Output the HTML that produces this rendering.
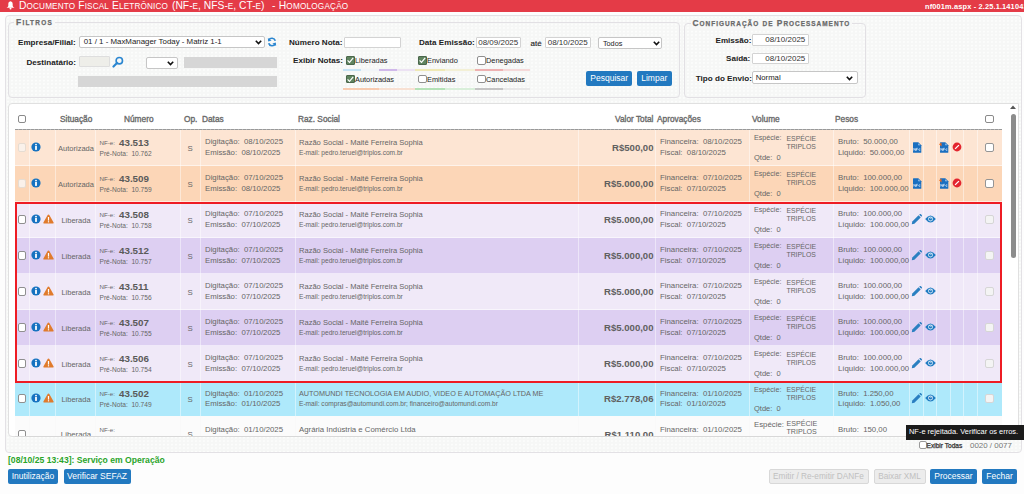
<!DOCTYPE html><html><head><meta charset='utf-8'><style>
*{box-sizing:border-box;margin:0;padding:0}
html,body{width:1024px;height:494px;overflow:hidden;background:#fdfdfd;font-family:"Liberation Sans", sans-serif;position:relative}
.a{position:absolute;white-space:pre}
.hdr{left:0;top:0;width:1024px;height:12px;background:#e43b47}
.panel{left:5px;top:15px;width:1017px;height:438px;border:1px solid #e3e1e5;border-radius:4px;background:radial-gradient(circle at 2px 1.5px,#fdfefd 0.7px,rgba(253,254,253,0) 1px) 0 0/4px 3.5px,#f6f7f6}
.fs{border:1px solid #e2e0e4;border-radius:4px}
.lg{font-weight:bold;color:#6a6a6a;-webkit-text-stroke:0.25px #6a6a6a;background:#f7f8f7;padding:0 2px}
.lbl{font-weight:bold;color:#222;font-size:8.1px;line-height:10px}
.inp{background:#fff;border:1px solid #d3d3d3;border-radius:1px;font-size:8.6px;color:#333;line-height:9px}
.sel{background:#fff;border:1px solid #c6c6c6;border-radius:2px;font-size:8.2px;color:#222;line-height:9px}
.btn{background:#2279c0;color:#fff;border-radius:2px;font-size:8.5px;text-align:center;line-height:15px}
.btnd{background:#ececec;color:#c0c0c0;border:1px solid #d8d8d8;border-radius:2px;font-size:8.25px;text-align:center;line-height:13px}
.gbar{background:#d6d6d6}
.cb{width:8.5px;height:8.5px;border:1px solid #8f8f8f;border-radius:2px;background:#fff}
.cbd{width:8.5px;height:8.5px;border:1px solid #d6d6d6;border-radius:2px;background:#f4f4f4}
.cbc{width:8.5px;height:8.5px;border:1px solid #4a664b;border-radius:1px;background:#5f845f}
.ck{font-size:7.4px;color:#222;line-height:9px}
.t{font-size:7.8px;color:#666;line-height:9px}
.ts{font-size:6.6px;color:#666;line-height:8px}
.th{font-size:8.3px;color:#6a6a6a;line-height:10px;-webkit-text-stroke:0.35px #6a6a6a}
.num{font-size:9.8px;font-weight:bold;color:#5a5a5a;line-height:10px}
.val{font-size:9.57px;font-weight:bold;color:#606060;line-height:10px}
.dv{width:1px;background:rgba(255,255,255,.45)}
</style></head><body><div class="a hdr"></div>
<svg class="a" style="left:5.5px;top:0px" width="9" height="11" viewBox="0 0 9 11"><path d="M4.5 1.2C2.8 1.5 2.3 2.8 2.3 4.4L2.3 6Q2 7 0.5 7.8L8.5 7.8Q7 7 6.7 6L6.7 4.4C6.7 2.8 6.2 1.5 4.5 1.2Z" fill="#fff"/><circle cx="4.5" cy="8.6" r="1" fill="#fff"/></svg>
<div class="a " style="left:19px;top:-0.5px;font-size:10.3px;line-height:11px;color:#fff;letter-spacing:0.13px">D<span style='font-size:8.2px'>OCUMENTO</span> F<span style='font-size:8.2px'>ISCAL</span> E<span style='font-size:8.2px'>LETRÔNICO</span></div>
<div class="a " style="left:172px;top:-0.5px;font-size:10.3px;line-height:11px;color:#fff">(NF-<span style='font-size:8.2px'>E</span>, NFS-<span style='font-size:8.2px'>E</span>, CT-<span style='font-size:8.2px'>E</span>)</div>
<div class="a " style="left:272px;top:-0.5px;font-size:10.3px;line-height:11px;color:#fff;letter-spacing:0.2px">- H<span style='font-size:8.2px'>OMOLOGAÇÃO</span></div>
<div class="a " style="left:925px;top:1px;font-size:7.4px;line-height:11px;color:#fff;font-weight:bold;letter-spacing:0.15px">nf001m.aspx - 2.25.1.141041</div>
<div class="a panel"></div>
<div class="a fs" style="left:8px;top:22px;width:672px;height:76px;"></div>
<div class="a lg" style="left:14px;top:17.2px;font-size:8.4px;line-height:10px;letter-spacing:1.25px">F<span style='font-size:6.45px'>ILTROS</span></div>
<div class="a fs" style="left:684px;top:22.5px;width:182px;height:75px;"></div>
<div class="a lg" style="left:690.5px;top:18px;font-size:8.4px;line-height:10px;letter-spacing:1px">C<span style='font-size:6.45px'>ONFIGURAÇÃO</span> <span style='font-size:6.45px'>DE</span> P<span style='font-size:6.45px'>ROCESSAMENTO</span></div>
<div class="a lbl" style="left:18px;top:37.5px;">Empresa/Filial:</div>
<div class="a sel" style="left:78.5px;top:36px;width:186px;height:11.5px;padding-left:2px;line-height:10.5px;font-size:7.9px"> 01 / 1 - MaxManager Today - Matriz 1-1</div>
<svg class="a" style="left:255px;top:40px" width="7" height="5" viewBox="0 0 7 5"><path d="M0.8 0.8L3.5 3.6L6.2 0.8" stroke="#111" stroke-width="1.6" fill="none"/></svg>
<svg class="a" style="left:267px;top:37px" width="10" height="10" viewBox="0 0 10 10"><path d="M8.3 3.8A3.5 3.5 0 0 0 1.8 3.2" stroke="#2b86d0" stroke-width="1.7" fill="none"/><path d="M0.8 1L1.2 4.6L4.6 3.6Z" fill="#2b86d0"/><path d="M1.7 6.2A3.5 3.5 0 0 0 8.2 6.8" stroke="#2b86d0" stroke-width="1.7" fill="none"/><path d="M9.2 9L8.8 5.4L5.4 6.4Z" fill="#2b86d0"/></svg>
<div class="a lbl" style="left:26.5px;top:57.5px;">Destinatário:</div>
<div class="a " style="left:78.5px;top:56px;width:31px;height:11px;background:#eeeee9;border:1px solid #dedede;border-radius:1px"></div>
<svg class="a" style="left:112px;top:56px" width="12" height="12" viewBox="0 0 12 12"><circle cx="7.3" cy="4.7" r="3.2" stroke="#2b86d0" stroke-width="1.6" fill="none"/><path d="M5 7L1.5 10.5" stroke="#2b86d0" stroke-width="2.2" stroke-linecap="round"/></svg>
<div class="a sel" style="left:145.5px;top:56.5px;width:32px;height:12px;"></div>
<svg class="a" style="left:167px;top:60.5px" width="7" height="5" viewBox="0 0 7 5"><path d="M0.8 0.8L3.5 3.6L6.2 0.8" stroke="#111" stroke-width="1.6" fill="none"/></svg>
<div class="a gbar" style="left:184px;top:57px;width:93px;height:10.5px;"></div>
<div class="a gbar" style="left:78px;top:76.2px;width:199px;height:10.5px;"></div>
<div class="a lbl" style="left:289px;top:38px;">Número Nota:</div>
<div class="a inp" style="left:343.5px;top:37px;width:57px;height:10.5px;"></div>
<div class="a lbl" style="left:293px;top:56px;">Exibir Notas:</div>
<div class="a cbc" style="left:346px;top:56px;"></div>
<svg class="a" style="left:346px;top:56px" width="9" height="9" viewBox="0 0 9 9"><path d="M1.6 4.4L3.5 6.4L7.2 1.8" stroke="#fff" stroke-width="1.2" fill="none"/></svg>
<div class="a ck" style="left:355px;top:56px;">Liberadas</div>
<div class="a cbc" style="left:418px;top:56px;"></div>
<svg class="a" style="left:418px;top:56px" width="9" height="9" viewBox="0 0 9 9"><path d="M1.6 4.4L3.5 6.4L7.2 1.8" stroke="#fff" stroke-width="1.2" fill="none"/></svg>
<div class="a ck" style="left:427px;top:56px;">Enviando</div>
<div class="a cb" style="left:477px;top:56px;"></div>
<div class="a ck" style="left:486px;top:56px;">Denegadas</div>
<div class="a cbc" style="left:346px;top:74.5px;"></div>
<svg class="a" style="left:346px;top:74.5px" width="9" height="9" viewBox="0 0 9 9"><path d="M1.6 4.4L3.5 6.4L7.2 1.8" stroke="#fff" stroke-width="1.2" fill="none"/></svg>
<div class="a ck" style="left:355px;top:74.5px;">Autorizadas</div>
<div class="a cb" style="left:418px;top:74.5px;"></div>
<div class="a ck" style="left:427px;top:74.5px;">Emitidas</div>
<div class="a cb" style="left:477px;top:74.5px;"></div>
<div class="a ck" style="left:486px;top:74.5px;">Canceladas</div>
<div class="a " style="left:343px;top:69px;width:18px;height:2px;background:#c5e3f5"></div>
<div class="a " style="left:361px;top:69px;width:18px;height:2px;background:#f1f5f8"></div>
<div class="a " style="left:379px;top:69px;width:18px;height:2px;background:#d0b8ea"></div>
<div class="a " style="left:397px;top:69px;width:18px;height:2px;background:#ece2f3"></div>
<div class="a " style="left:415px;top:69px;width:30px;height:2px;background:#efe9b5"></div>
<div class="a " style="left:445px;top:69px;width:30px;height:2px;background:#f3f0d6"></div>
<div class="a " style="left:475px;top:69px;width:28px;height:2px;background:#eeb1b1"></div>
<div class="a " style="left:503px;top:69px;width:27px;height:2px;background:#f5d9d9"></div>
<div class="a " style="left:343px;top:87.5px;width:36px;height:2px;background:#f8cbb0"></div>
<div class="a " style="left:379px;top:87.5px;width:36px;height:2px;background:#f8e1d3"></div>
<div class="a " style="left:415px;top:87.5px;width:30px;height:2px;background:#b5e2b7"></div>
<div class="a " style="left:445px;top:87.5px;width:30px;height:2px;background:#d9efda"></div>
<div class="a " style="left:475px;top:87.5px;width:28px;height:2px;background:#c4c4c4"></div>
<div class="a " style="left:503px;top:87.5px;width:27px;height:2px;background:#e8e8e8"></div>
<div class="a lbl" style="left:419px;top:38px;">Data Emissão:</div>
<div class="a inp" style="left:475.5px;top:37px;width:45.5px;height:10.5px;text-align:center;font-size:8px">08/09/2025</div>
<div class="a " style="left:530.5px;top:38.5px;font-size:8px;color:#222;line-height:10px;-webkit-text-stroke:0.15px #222">até</div>
<div class="a inp" style="left:545px;top:37px;width:45.5px;height:10.5px;text-align:center;font-size:8px">08/10/2025</div>
<div class="a sel" style="left:598px;top:36.5px;width:64px;height:12px;padding-left:2px;line-height:11px;font-size:7.3px"> Todos</div>
<svg class="a" style="left:652.5px;top:40.5px" width="7" height="5" viewBox="0 0 7 5"><path d="M0.8 0.8L3.5 3.6L6.2 0.8" stroke="#111" stroke-width="1.6" fill="none"/></svg>
<div class="a btn" style="left:586.2px;top:71.3px;width:46px;height:15px;">Pesquisar</div>
<div class="a btn" style="left:636.9px;top:71.3px;width:34.7px;height:15px;">Limpar</div>
<div class="a lbl" style="left:715.5px;top:35.5px;">Emissão:</div>
<div class="a inp" style="left:751.5px;top:34px;width:57px;height:11.5px;text-align:right;line-height:10px;font-size:8px">08/10/2025 </div>
<div class="a lbl" style="left:726px;top:53.5px;">Saída:</div>
<div class="a inp" style="left:751.5px;top:53px;width:57px;height:10.5px;text-align:right;line-height:9px;font-size:8px">08/10/2025 </div>
<div class="a lbl" style="left:695.8px;top:73.5px;">Tipo do Envio:</div>
<div class="a sel" style="left:751.5px;top:71px;width:106px;height:13px;padding-left:1px;line-height:12px;font-size:7.75px"> Normal</div>
<svg class="a" style="left:846px;top:75.5px" width="7" height="5" viewBox="0 0 7 5"><path d="M0.8 0.8L3.5 3.6L6.2 0.8" stroke="#111" stroke-width="1.6" fill="none"/></svg>
<div class="a " style="left:8px;top:102.5px;width:1011px;height:334px;background:#fff;border:1px solid #e0e0e0;border-radius:4px 0 4px 4px"></div>
<div class="a cb" style="left:17.5px;top:114.5px;border-color:#8a8a8a"></div>
<div class="a th" style="left:60px;top:114px;">Situação</div>
<div class="a th" style="left:124px;top:114px;">Número</div>
<div class="a th" style="left:184px;top:114px;">Op.</div>
<div class="a th" style="left:202px;top:114px;">Datas</div>
<div class="a th" style="left:298px;top:114px;">Raz. Social</div>
<div class="a th" style="left:615px;top:114px;">Valor Total</div>
<div class="a th" style="left:657px;top:114px;">Aprovações</div>
<div class="a th" style="left:752px;top:114px;">Volume</div>
<div class="a th" style="left:835px;top:114px;">Pesos</div>
<div class="a cb" style="left:985px;top:114.5px;border-color:#8a8a8a"></div>
<div class="a " style="left:15px;top:128.5px;width:987px;height:2px;background:repeating-linear-gradient(90deg,#999 0 3px,#b5b5b5 3px 4px)"></div>
<div class="a " style="left:15px;top:130px;width:987px;height:36px;background:#fde5d3"></div>
<div class="a dv" style="left:29px;top:130px;height:36px;"></div>
<div class="a dv" style="left:55px;top:130px;height:36px;"></div>
<div class="a dv" style="left:95px;top:130px;height:36px;"></div>
<div class="a dv" style="left:180px;top:130px;height:36px;"></div>
<div class="a dv" style="left:200px;top:130px;height:36px;"></div>
<div class="a dv" style="left:295px;top:130px;height:36px;"></div>
<div class="a dv" style="left:578px;top:130px;height:36px;"></div>
<div class="a dv" style="left:655px;top:130px;height:36px;"></div>
<div class="a dv" style="left:749px;top:130px;height:36px;"></div>
<div class="a dv" style="left:833px;top:130px;height:36px;"></div>
<div class="a dv" style="left:909px;top:130px;height:36px;"></div>
<div class="a dv" style="left:923px;top:130px;height:36px;"></div>
<div class="a dv" style="left:936px;top:130px;height:36px;"></div>
<div class="a dv" style="left:950px;top:130px;height:36px;"></div>
<div class="a dv" style="left:963px;top:130px;height:36px;"></div>
<div class="a dv" style="left:977px;top:130px;height:36px;"></div>
<div class="a " style="left:15px;top:165px;width:987px;height:1px;background:rgba(255,255,255,.55)"></div>
<div class="a cbd" style="left:17.5px;top:143.0px;border-color:#e6dcd2;background:#faf1ea"></div>
<svg class="a" style="left:31px;top:142.0px" width="10" height="10" viewBox="0 0 10 10"><circle cx="5" cy="5" r="4.6" fill="#1672c0"/><rect x="4.1" y="4" width="1.8" height="3.9" fill="#fff"/><circle cx="5" cy="2.6" r="0.95" fill="#fff"/></svg>
<div class="a t" style="left:57px;top:143.5px;width:38px;text-align:center;font-size:7.5px">Autorizada</div>
<div class="a ts" style="left:99.5px;top:139.0px;font-size:6.2px">NF-e:</div>
<div class="a num" style="left:119px;top:138.0px;">43.513</div>
<div class="a ts" style="left:99.5px;top:149.5px;">Pré-Nota:  10.762</div>
<div class="a t" style="left:187px;top:143.5px;width:6px;text-align:center">S</div>
<div class="a t" style="left:205px;top:137.4px;">Digitação:  08/10/2025</div>
<div class="a t" style="left:205px;top:147.9px;">Emissão:  08/10/2025</div>
<div class="a t" style="left:299px;top:138.0px;font-size:7.55px">Razão Social - Maitê Ferreira Sophia</div>
<div class="a ts" style="left:299px;top:148.5px;">E-mail: pedro.teruel@triplos.com.br</div>
<div class="a val" style="left:560px;top:143.0px;width:93.5px;text-align:right">R$500,00</div>
<div class="a t" style="left:660px;top:137.4px;">Financeira:  08/10/2025</div>
<div class="a t" style="left:660px;top:147.9px;">Fiscal:  08/10/2025</div>
<div class="a t" style="left:754px;top:134.4px;font-size:7.15px">Espécie:</div>
<div class="a t" style="left:786.5px;top:134.0px;font-size:6.85px">ESPÉCIE</div>
<div class="a t" style="left:786.5px;top:142.0px;font-size:6.85px">TRIPLOS</div>
<div class="a t" style="left:754px;top:153.0px;font-size:7.5px">Qtde:  0</div>
<div class="a t" style="left:838px;top:137.4px;">Bruto:  50.000,00</div>
<div class="a t" style="left:838px;top:147.9px;">Liquido:  50.000,00</div>
<svg class="a" style="left:911.5px;top:141.7px" width="10" height="11" viewBox="0 0 10 11"><path d="M1 0.8Q1 0.3 1.5 0.3L6.3 0.3L9.3 3.3L9.3 10.2Q9.3 10.7 8.8 10.7L1.5 10.7Q1 10.7 1 10.2Z" fill="#1a6fc0"/><path d="M6.3 1.3L6.3 3.3L8.3 3.3Z" fill="#b8d4ef"/><path d="M1.9 8.6L1.9 6.3L3.6 8.6L3.6 6.3 M4.5 8.6L4.5 6.3L5.8 6.3 M4.5 7.4L5.5 7.4 M8.3 6.9Q6.7 6.5 6.7 7.6Q6.7 8.7 8.3 8.3" stroke="#d6e6f6" stroke-width="0.75" fill="none"/></svg>
<svg class="a" style="left:938.5px;top:141.7px" width="10" height="11" viewBox="0 0 10 11"><path d="M1 0.8Q1 0.3 1.5 0.3L6.3 0.3L9.3 3.3L9.3 10.2Q9.3 10.7 8.8 10.7L1.5 10.7Q1 10.7 1 10.2Z" fill="#1a6fc0"/><path d="M6.3 1.3L6.3 3.3L8.3 3.3Z" fill="#b8d4ef"/><path d="M1.9 8.6L1.9 6.3L3.6 8.6L3.6 6.3 M4.5 8.6L4.5 6.3L5.8 6.3 M4.5 7.4L5.5 7.4 M8.3 6.9Q6.7 6.5 6.7 7.6Q6.7 8.7 8.3 8.3" stroke="#d6e6f6" stroke-width="0.75" fill="none"/><path d="M0 2.2L2.4 0.4L2.6 4.6Z" fill="#f06a1c"/></svg>
<svg class="a" style="left:951.5px;top:142.0px" width="10" height="10" viewBox="0 0 10 10"><circle cx="5" cy="5" r="4.4" fill="#e3252f"/><path d="M3.1 6.9L6.9 3.1" stroke="#fff" stroke-width="1.3"/></svg>
<div class="a cb" style="left:985px;top:143.0px;border-color:#959595"></div>
<div class="a " style="left:15px;top:166px;width:987px;height:36px;background:#fcd6b7"></div>
<div class="a dv" style="left:29px;top:166px;height:36px;"></div>
<div class="a dv" style="left:55px;top:166px;height:36px;"></div>
<div class="a dv" style="left:95px;top:166px;height:36px;"></div>
<div class="a dv" style="left:180px;top:166px;height:36px;"></div>
<div class="a dv" style="left:200px;top:166px;height:36px;"></div>
<div class="a dv" style="left:295px;top:166px;height:36px;"></div>
<div class="a dv" style="left:578px;top:166px;height:36px;"></div>
<div class="a dv" style="left:655px;top:166px;height:36px;"></div>
<div class="a dv" style="left:749px;top:166px;height:36px;"></div>
<div class="a dv" style="left:833px;top:166px;height:36px;"></div>
<div class="a dv" style="left:909px;top:166px;height:36px;"></div>
<div class="a dv" style="left:923px;top:166px;height:36px;"></div>
<div class="a dv" style="left:936px;top:166px;height:36px;"></div>
<div class="a dv" style="left:950px;top:166px;height:36px;"></div>
<div class="a dv" style="left:963px;top:166px;height:36px;"></div>
<div class="a dv" style="left:977px;top:166px;height:36px;"></div>
<div class="a " style="left:15px;top:201px;width:987px;height:1px;background:rgba(255,255,255,.55)"></div>
<div class="a cbd" style="left:17.5px;top:179.0px;border-color:#e6dcd2;background:#faf1ea"></div>
<svg class="a" style="left:31px;top:178.0px" width="10" height="10" viewBox="0 0 10 10"><circle cx="5" cy="5" r="4.6" fill="#1672c0"/><rect x="4.1" y="4" width="1.8" height="3.9" fill="#fff"/><circle cx="5" cy="2.6" r="0.95" fill="#fff"/></svg>
<div class="a t" style="left:57px;top:179.5px;width:38px;text-align:center;font-size:7.5px">Autorizada</div>
<div class="a ts" style="left:99.5px;top:175.0px;font-size:6.2px">NF-e:</div>
<div class="a num" style="left:119px;top:174.0px;">43.509</div>
<div class="a ts" style="left:99.5px;top:185.5px;">Pré-Nota:  10.759</div>
<div class="a t" style="left:187px;top:179.5px;width:6px;text-align:center">S</div>
<div class="a t" style="left:205px;top:173.4px;">Digitação:  07/10/2025</div>
<div class="a t" style="left:205px;top:183.9px;">Emissão:  08/10/2025</div>
<div class="a t" style="left:299px;top:174.0px;font-size:7.55px">Razão Social - Maitê Ferreira Sophia</div>
<div class="a ts" style="left:299px;top:184.5px;">E-mail: pedro.teruel@triplos.com.br</div>
<div class="a val" style="left:560px;top:179.0px;width:93.5px;text-align:right">R$5.000,00</div>
<div class="a t" style="left:660px;top:173.4px;">Financeira:  07/10/2025</div>
<div class="a t" style="left:660px;top:183.9px;">Fiscal:  07/10/2025</div>
<div class="a t" style="left:754px;top:170.4px;font-size:7.15px">Espécie:</div>
<div class="a t" style="left:786.5px;top:170.0px;font-size:6.85px">ESPÉCIE</div>
<div class="a t" style="left:786.5px;top:178.0px;font-size:6.85px">TRIPLOS</div>
<div class="a t" style="left:754px;top:189.0px;font-size:7.5px">Qtde:  0</div>
<div class="a t" style="left:838px;top:173.4px;">Bruto:  100.000,00</div>
<div class="a t" style="left:838px;top:183.9px;">Liquido:  100.000,00</div>
<svg class="a" style="left:911.5px;top:177.7px" width="10" height="11" viewBox="0 0 10 11"><path d="M1 0.8Q1 0.3 1.5 0.3L6.3 0.3L9.3 3.3L9.3 10.2Q9.3 10.7 8.8 10.7L1.5 10.7Q1 10.7 1 10.2Z" fill="#1a6fc0"/><path d="M6.3 1.3L6.3 3.3L8.3 3.3Z" fill="#b8d4ef"/><path d="M1.9 8.6L1.9 6.3L3.6 8.6L3.6 6.3 M4.5 8.6L4.5 6.3L5.8 6.3 M4.5 7.4L5.5 7.4 M8.3 6.9Q6.7 6.5 6.7 7.6Q6.7 8.7 8.3 8.3" stroke="#d6e6f6" stroke-width="0.75" fill="none"/></svg>
<svg class="a" style="left:938.5px;top:177.7px" width="10" height="11" viewBox="0 0 10 11"><path d="M1 0.8Q1 0.3 1.5 0.3L6.3 0.3L9.3 3.3L9.3 10.2Q9.3 10.7 8.8 10.7L1.5 10.7Q1 10.7 1 10.2Z" fill="#1a6fc0"/><path d="M6.3 1.3L6.3 3.3L8.3 3.3Z" fill="#b8d4ef"/><path d="M1.9 8.6L1.9 6.3L3.6 8.6L3.6 6.3 M4.5 8.6L4.5 6.3L5.8 6.3 M4.5 7.4L5.5 7.4 M8.3 6.9Q6.7 6.5 6.7 7.6Q6.7 8.7 8.3 8.3" stroke="#d6e6f6" stroke-width="0.75" fill="none"/><path d="M0 2.2L2.4 0.4L2.6 4.6Z" fill="#f06a1c"/></svg>
<svg class="a" style="left:951.5px;top:178.0px" width="10" height="10" viewBox="0 0 10 10"><circle cx="5" cy="5" r="4.4" fill="#e3252f"/><path d="M3.1 6.9L6.9 3.1" stroke="#fff" stroke-width="1.3"/></svg>
<div class="a cb" style="left:985px;top:179.0px;border-color:#959595"></div>
<div class="a " style="left:15px;top:202px;width:987px;height:36px;background:#f0e9f8"></div>
<div class="a dv" style="left:29px;top:202px;height:36px;"></div>
<div class="a dv" style="left:55px;top:202px;height:36px;"></div>
<div class="a dv" style="left:95px;top:202px;height:36px;"></div>
<div class="a dv" style="left:180px;top:202px;height:36px;"></div>
<div class="a dv" style="left:200px;top:202px;height:36px;"></div>
<div class="a dv" style="left:295px;top:202px;height:36px;"></div>
<div class="a dv" style="left:578px;top:202px;height:36px;"></div>
<div class="a dv" style="left:655px;top:202px;height:36px;"></div>
<div class="a dv" style="left:749px;top:202px;height:36px;"></div>
<div class="a dv" style="left:833px;top:202px;height:36px;"></div>
<div class="a dv" style="left:909px;top:202px;height:36px;"></div>
<div class="a dv" style="left:923px;top:202px;height:36px;"></div>
<div class="a dv" style="left:936px;top:202px;height:36px;"></div>
<div class="a dv" style="left:950px;top:202px;height:36px;"></div>
<div class="a dv" style="left:963px;top:202px;height:36px;"></div>
<div class="a dv" style="left:977px;top:202px;height:36px;"></div>
<div class="a " style="left:15px;top:237px;width:987px;height:1px;background:rgba(255,255,255,.55)"></div>
<div class="a cb" style="left:17.5px;top:215.0px;"></div>
<svg class="a" style="left:31px;top:214.0px" width="10" height="10" viewBox="0 0 10 10"><circle cx="5" cy="5" r="4.6" fill="#1672c0"/><rect x="4.1" y="4" width="1.8" height="3.9" fill="#fff"/><circle cx="5" cy="2.6" r="0.95" fill="#fff"/></svg>
<svg class="a" style="left:43.2px;top:213.8px" width="11" height="10" viewBox="0 0 11 10"><path d="M5.5 0.6Q6.1 0.6 6.5 1.3L10.6 8.4Q11 9.4 10 9.5L1 9.5Q0 9.4 0.4 8.4L4.5 1.3Q4.9 0.6 5.5 0.6Z" fill="#e07b2c"/><rect x="4.9" y="3" width="1.2" height="3.6" fill="#fff"/><rect x="4.9" y="7.2" width="1.2" height="1.2" fill="#fff"/></svg>
<div class="a t" style="left:57px;top:215.5px;width:38px;text-align:center;font-size:7.5px">Liberada</div>
<div class="a ts" style="left:99.5px;top:211.0px;font-size:6.2px">NF-e:</div>
<div class="a num" style="left:119px;top:210.0px;">43.508</div>
<div class="a ts" style="left:99.5px;top:221.5px;">Pré-Nota:  10.758</div>
<div class="a t" style="left:187px;top:215.5px;width:6px;text-align:center">S</div>
<div class="a t" style="left:205px;top:209.4px;">Digitação:  07/10/2025</div>
<div class="a t" style="left:205px;top:219.9px;">Emissão:  07/10/2025</div>
<div class="a t" style="left:299px;top:210.0px;font-size:7.55px">Razão Social - Maitê Ferreira Sophia</div>
<div class="a ts" style="left:299px;top:220.5px;">E-mail: pedro.teruel@triplos.com.br</div>
<div class="a val" style="left:560px;top:215.0px;width:93.5px;text-align:right">R$5.000,00</div>
<div class="a t" style="left:660px;top:209.4px;">Financeira:  07/10/2025</div>
<div class="a t" style="left:660px;top:219.9px;">Fiscal:  07/10/2025</div>
<div class="a t" style="left:754px;top:206.4px;font-size:7.15px">Espécie:</div>
<div class="a t" style="left:786.5px;top:206.0px;font-size:6.85px">ESPÉCIE</div>
<div class="a t" style="left:786.5px;top:214.0px;font-size:6.85px">TRIPLOS</div>
<div class="a t" style="left:754px;top:225.0px;font-size:7.5px">Qtde:  0</div>
<div class="a t" style="left:838px;top:209.4px;">Bruto:  100.000,00</div>
<div class="a t" style="left:838px;top:219.9px;">Líquido:  100.000,00</div>
<svg class="a" style="left:910.8px;top:213.7px" width="11" height="11" viewBox="0 0 11 11"><path d="M0.8 10.2L1.3 7.6L7.6 1.3L9.7 3.4L3.4 9.7Z" fill="#2a7fc1"/><path d="M8.2 0.7L9 0.1Q9.5 -0.2 10 0.3L10.7 1Q11.2 1.5 10.9 2L10.3 2.8Z" fill="#2a7fc1"/></svg>
<svg class="a" style="left:924.5px;top:215.0px" width="11" height="8" viewBox="0 0 11 8"><path d="M0.2 4Q5.5 -3.2 10.8 4Q5.5 11.2 0.2 4Z" fill="#1f7bc2"/><circle cx="5.5" cy="4" r="2.4" fill="#dcebf7"/><circle cx="5.5" cy="4" r="1.6" fill="#1f7bc2"/><circle cx="5.9" cy="3.6" r="0.5" fill="#dcebf7"/></svg>
<div class="a cbd" style="left:985px;top:215.0px;"></div>
<div class="a " style="left:15px;top:238px;width:987px;height:36px;background:#ddcff2"></div>
<div class="a dv" style="left:29px;top:238px;height:36px;"></div>
<div class="a dv" style="left:55px;top:238px;height:36px;"></div>
<div class="a dv" style="left:95px;top:238px;height:36px;"></div>
<div class="a dv" style="left:180px;top:238px;height:36px;"></div>
<div class="a dv" style="left:200px;top:238px;height:36px;"></div>
<div class="a dv" style="left:295px;top:238px;height:36px;"></div>
<div class="a dv" style="left:578px;top:238px;height:36px;"></div>
<div class="a dv" style="left:655px;top:238px;height:36px;"></div>
<div class="a dv" style="left:749px;top:238px;height:36px;"></div>
<div class="a dv" style="left:833px;top:238px;height:36px;"></div>
<div class="a dv" style="left:909px;top:238px;height:36px;"></div>
<div class="a dv" style="left:923px;top:238px;height:36px;"></div>
<div class="a dv" style="left:936px;top:238px;height:36px;"></div>
<div class="a dv" style="left:950px;top:238px;height:36px;"></div>
<div class="a dv" style="left:963px;top:238px;height:36px;"></div>
<div class="a dv" style="left:977px;top:238px;height:36px;"></div>
<div class="a " style="left:15px;top:273px;width:987px;height:1px;background:rgba(255,255,255,.55)"></div>
<div class="a cb" style="left:17.5px;top:251.0px;"></div>
<svg class="a" style="left:31px;top:250.0px" width="10" height="10" viewBox="0 0 10 10"><circle cx="5" cy="5" r="4.6" fill="#1672c0"/><rect x="4.1" y="4" width="1.8" height="3.9" fill="#fff"/><circle cx="5" cy="2.6" r="0.95" fill="#fff"/></svg>
<svg class="a" style="left:43.2px;top:249.8px" width="11" height="10" viewBox="0 0 11 10"><path d="M5.5 0.6Q6.1 0.6 6.5 1.3L10.6 8.4Q11 9.4 10 9.5L1 9.5Q0 9.4 0.4 8.4L4.5 1.3Q4.9 0.6 5.5 0.6Z" fill="#e07b2c"/><rect x="4.9" y="3" width="1.2" height="3.6" fill="#fff"/><rect x="4.9" y="7.2" width="1.2" height="1.2" fill="#fff"/></svg>
<div class="a t" style="left:57px;top:251.5px;width:38px;text-align:center;font-size:7.5px">Liberada</div>
<div class="a ts" style="left:99.5px;top:247.0px;font-size:6.2px">NF-e:</div>
<div class="a num" style="left:119px;top:246.0px;">43.512</div>
<div class="a ts" style="left:99.5px;top:257.5px;">Pré-Nota:  10.757</div>
<div class="a t" style="left:187px;top:251.5px;width:6px;text-align:center">S</div>
<div class="a t" style="left:205px;top:245.4px;">Digitação:  07/10/2025</div>
<div class="a t" style="left:205px;top:255.9px;">Emissão:  07/10/2025</div>
<div class="a t" style="left:299px;top:246.0px;font-size:7.55px">Razão Social - Maitê Ferreira Sophia</div>
<div class="a ts" style="left:299px;top:256.5px;">E-mail: pedro.teruel@triplos.com.br</div>
<div class="a val" style="left:560px;top:251.0px;width:93.5px;text-align:right">R$5.000,00</div>
<div class="a t" style="left:660px;top:245.4px;">Financeira:  07/10/2025</div>
<div class="a t" style="left:660px;top:255.9px;">Fiscal:  07/10/2025</div>
<div class="a t" style="left:754px;top:242.4px;font-size:7.15px">Espécie:</div>
<div class="a t" style="left:786.5px;top:242.0px;font-size:6.85px">ESPÉCIE</div>
<div class="a t" style="left:786.5px;top:250.0px;font-size:6.85px">TRIPLOS</div>
<div class="a t" style="left:754px;top:261.0px;font-size:7.5px">Qtde:  0</div>
<div class="a t" style="left:838px;top:245.4px;">Bruto:  100.000,00</div>
<div class="a t" style="left:838px;top:255.9px;">Líquido:  100.000,00</div>
<svg class="a" style="left:910.8px;top:249.7px" width="11" height="11" viewBox="0 0 11 11"><path d="M0.8 10.2L1.3 7.6L7.6 1.3L9.7 3.4L3.4 9.7Z" fill="#2a7fc1"/><path d="M8.2 0.7L9 0.1Q9.5 -0.2 10 0.3L10.7 1Q11.2 1.5 10.9 2L10.3 2.8Z" fill="#2a7fc1"/></svg>
<svg class="a" style="left:924.5px;top:251.0px" width="11" height="8" viewBox="0 0 11 8"><path d="M0.2 4Q5.5 -3.2 10.8 4Q5.5 11.2 0.2 4Z" fill="#1f7bc2"/><circle cx="5.5" cy="4" r="2.4" fill="#dcebf7"/><circle cx="5.5" cy="4" r="1.6" fill="#1f7bc2"/><circle cx="5.9" cy="3.6" r="0.5" fill="#dcebf7"/></svg>
<div class="a cbd" style="left:985px;top:251.0px;"></div>
<div class="a " style="left:15px;top:274px;width:987px;height:36px;background:#f0e9f8"></div>
<div class="a dv" style="left:29px;top:274px;height:36px;"></div>
<div class="a dv" style="left:55px;top:274px;height:36px;"></div>
<div class="a dv" style="left:95px;top:274px;height:36px;"></div>
<div class="a dv" style="left:180px;top:274px;height:36px;"></div>
<div class="a dv" style="left:200px;top:274px;height:36px;"></div>
<div class="a dv" style="left:295px;top:274px;height:36px;"></div>
<div class="a dv" style="left:578px;top:274px;height:36px;"></div>
<div class="a dv" style="left:655px;top:274px;height:36px;"></div>
<div class="a dv" style="left:749px;top:274px;height:36px;"></div>
<div class="a dv" style="left:833px;top:274px;height:36px;"></div>
<div class="a dv" style="left:909px;top:274px;height:36px;"></div>
<div class="a dv" style="left:923px;top:274px;height:36px;"></div>
<div class="a dv" style="left:936px;top:274px;height:36px;"></div>
<div class="a dv" style="left:950px;top:274px;height:36px;"></div>
<div class="a dv" style="left:963px;top:274px;height:36px;"></div>
<div class="a dv" style="left:977px;top:274px;height:36px;"></div>
<div class="a " style="left:15px;top:309px;width:987px;height:1px;background:rgba(255,255,255,.55)"></div>
<div class="a cb" style="left:17.5px;top:287.0px;"></div>
<svg class="a" style="left:31px;top:286.0px" width="10" height="10" viewBox="0 0 10 10"><circle cx="5" cy="5" r="4.6" fill="#1672c0"/><rect x="4.1" y="4" width="1.8" height="3.9" fill="#fff"/><circle cx="5" cy="2.6" r="0.95" fill="#fff"/></svg>
<svg class="a" style="left:43.2px;top:285.8px" width="11" height="10" viewBox="0 0 11 10"><path d="M5.5 0.6Q6.1 0.6 6.5 1.3L10.6 8.4Q11 9.4 10 9.5L1 9.5Q0 9.4 0.4 8.4L4.5 1.3Q4.9 0.6 5.5 0.6Z" fill="#e07b2c"/><rect x="4.9" y="3" width="1.2" height="3.6" fill="#fff"/><rect x="4.9" y="7.2" width="1.2" height="1.2" fill="#fff"/></svg>
<div class="a t" style="left:57px;top:287.5px;width:38px;text-align:center;font-size:7.5px">Liberada</div>
<div class="a ts" style="left:99.5px;top:283.0px;font-size:6.2px">NF-e:</div>
<div class="a num" style="left:119px;top:282.0px;">43.511</div>
<div class="a ts" style="left:99.5px;top:293.5px;">Pré-Nota:  10.756</div>
<div class="a t" style="left:187px;top:287.5px;width:6px;text-align:center">S</div>
<div class="a t" style="left:205px;top:281.4px;">Digitação:  07/10/2025</div>
<div class="a t" style="left:205px;top:291.9px;">Emissão:  07/10/2025</div>
<div class="a t" style="left:299px;top:282.0px;font-size:7.55px">Razão Social - Maitê Ferreira Sophia</div>
<div class="a ts" style="left:299px;top:292.5px;">E-mail: pedro.teruel@triplos.com.br</div>
<div class="a val" style="left:560px;top:287.0px;width:93.5px;text-align:right">R$5.000,00</div>
<div class="a t" style="left:660px;top:281.4px;">Financeira:  07/10/2025</div>
<div class="a t" style="left:660px;top:291.9px;">Fiscal:  07/10/2025</div>
<div class="a t" style="left:754px;top:278.4px;font-size:7.15px">Espécie:</div>
<div class="a t" style="left:786.5px;top:278.0px;font-size:6.85px">ESPÉCIE</div>
<div class="a t" style="left:786.5px;top:286.0px;font-size:6.85px">TRIPLOS</div>
<div class="a t" style="left:754px;top:297.0px;font-size:7.5px">Qtde:  0</div>
<div class="a t" style="left:838px;top:281.4px;">Bruto:  100.000,00</div>
<div class="a t" style="left:838px;top:291.9px;">Líquido:  100.000,00</div>
<svg class="a" style="left:910.8px;top:285.7px" width="11" height="11" viewBox="0 0 11 11"><path d="M0.8 10.2L1.3 7.6L7.6 1.3L9.7 3.4L3.4 9.7Z" fill="#2a7fc1"/><path d="M8.2 0.7L9 0.1Q9.5 -0.2 10 0.3L10.7 1Q11.2 1.5 10.9 2L10.3 2.8Z" fill="#2a7fc1"/></svg>
<svg class="a" style="left:924.5px;top:287.0px" width="11" height="8" viewBox="0 0 11 8"><path d="M0.2 4Q5.5 -3.2 10.8 4Q5.5 11.2 0.2 4Z" fill="#1f7bc2"/><circle cx="5.5" cy="4" r="2.4" fill="#dcebf7"/><circle cx="5.5" cy="4" r="1.6" fill="#1f7bc2"/><circle cx="5.9" cy="3.6" r="0.5" fill="#dcebf7"/></svg>
<div class="a cbd" style="left:985px;top:287.0px;"></div>
<div class="a " style="left:15px;top:310px;width:987px;height:36px;background:#ddcff2"></div>
<div class="a dv" style="left:29px;top:310px;height:36px;"></div>
<div class="a dv" style="left:55px;top:310px;height:36px;"></div>
<div class="a dv" style="left:95px;top:310px;height:36px;"></div>
<div class="a dv" style="left:180px;top:310px;height:36px;"></div>
<div class="a dv" style="left:200px;top:310px;height:36px;"></div>
<div class="a dv" style="left:295px;top:310px;height:36px;"></div>
<div class="a dv" style="left:578px;top:310px;height:36px;"></div>
<div class="a dv" style="left:655px;top:310px;height:36px;"></div>
<div class="a dv" style="left:749px;top:310px;height:36px;"></div>
<div class="a dv" style="left:833px;top:310px;height:36px;"></div>
<div class="a dv" style="left:909px;top:310px;height:36px;"></div>
<div class="a dv" style="left:923px;top:310px;height:36px;"></div>
<div class="a dv" style="left:936px;top:310px;height:36px;"></div>
<div class="a dv" style="left:950px;top:310px;height:36px;"></div>
<div class="a dv" style="left:963px;top:310px;height:36px;"></div>
<div class="a dv" style="left:977px;top:310px;height:36px;"></div>
<div class="a " style="left:15px;top:345px;width:987px;height:1px;background:rgba(255,255,255,.55)"></div>
<div class="a cb" style="left:17.5px;top:323.0px;"></div>
<svg class="a" style="left:31px;top:322.0px" width="10" height="10" viewBox="0 0 10 10"><circle cx="5" cy="5" r="4.6" fill="#1672c0"/><rect x="4.1" y="4" width="1.8" height="3.9" fill="#fff"/><circle cx="5" cy="2.6" r="0.95" fill="#fff"/></svg>
<svg class="a" style="left:43.2px;top:321.8px" width="11" height="10" viewBox="0 0 11 10"><path d="M5.5 0.6Q6.1 0.6 6.5 1.3L10.6 8.4Q11 9.4 10 9.5L1 9.5Q0 9.4 0.4 8.4L4.5 1.3Q4.9 0.6 5.5 0.6Z" fill="#e07b2c"/><rect x="4.9" y="3" width="1.2" height="3.6" fill="#fff"/><rect x="4.9" y="7.2" width="1.2" height="1.2" fill="#fff"/></svg>
<div class="a t" style="left:57px;top:323.5px;width:38px;text-align:center;font-size:7.5px">Liberada</div>
<div class="a ts" style="left:99.5px;top:319.0px;font-size:6.2px">NF-e:</div>
<div class="a num" style="left:119px;top:318.0px;">43.507</div>
<div class="a ts" style="left:99.5px;top:329.5px;">Pré-Nota:  10.755</div>
<div class="a t" style="left:187px;top:323.5px;width:6px;text-align:center">S</div>
<div class="a t" style="left:205px;top:317.4px;">Digitação:  07/10/2025</div>
<div class="a t" style="left:205px;top:327.9px;">Emissão:  07/10/2025</div>
<div class="a t" style="left:299px;top:318.0px;font-size:7.55px">Razão Social - Maitê Ferreira Sophia</div>
<div class="a ts" style="left:299px;top:328.5px;">E-mail: pedro.teruel@triplos.com.br</div>
<div class="a val" style="left:560px;top:323.0px;width:93.5px;text-align:right">R$5.000,00</div>
<div class="a t" style="left:660px;top:317.4px;">Financeira:  07/10/2025</div>
<div class="a t" style="left:660px;top:327.9px;">Fiscal:  07/10/2025</div>
<div class="a t" style="left:754px;top:314.4px;font-size:7.15px">Espécie:</div>
<div class="a t" style="left:786.5px;top:314.0px;font-size:6.85px">ESPÉCIE</div>
<div class="a t" style="left:786.5px;top:322.0px;font-size:6.85px">TRIPLOS</div>
<div class="a t" style="left:754px;top:333.0px;font-size:7.5px">Qtde:  0</div>
<div class="a t" style="left:838px;top:317.4px;">Bruto:  100.000,00</div>
<div class="a t" style="left:838px;top:327.9px;">Líquido:  100.000,00</div>
<svg class="a" style="left:910.8px;top:321.7px" width="11" height="11" viewBox="0 0 11 11"><path d="M0.8 10.2L1.3 7.6L7.6 1.3L9.7 3.4L3.4 9.7Z" fill="#2a7fc1"/><path d="M8.2 0.7L9 0.1Q9.5 -0.2 10 0.3L10.7 1Q11.2 1.5 10.9 2L10.3 2.8Z" fill="#2a7fc1"/></svg>
<svg class="a" style="left:924.5px;top:323.0px" width="11" height="8" viewBox="0 0 11 8"><path d="M0.2 4Q5.5 -3.2 10.8 4Q5.5 11.2 0.2 4Z" fill="#1f7bc2"/><circle cx="5.5" cy="4" r="2.4" fill="#dcebf7"/><circle cx="5.5" cy="4" r="1.6" fill="#1f7bc2"/><circle cx="5.9" cy="3.6" r="0.5" fill="#dcebf7"/></svg>
<div class="a cbd" style="left:985px;top:323.0px;"></div>
<div class="a " style="left:15px;top:346px;width:987px;height:36px;background:#f0e9f8"></div>
<div class="a dv" style="left:29px;top:346px;height:36px;"></div>
<div class="a dv" style="left:55px;top:346px;height:36px;"></div>
<div class="a dv" style="left:95px;top:346px;height:36px;"></div>
<div class="a dv" style="left:180px;top:346px;height:36px;"></div>
<div class="a dv" style="left:200px;top:346px;height:36px;"></div>
<div class="a dv" style="left:295px;top:346px;height:36px;"></div>
<div class="a dv" style="left:578px;top:346px;height:36px;"></div>
<div class="a dv" style="left:655px;top:346px;height:36px;"></div>
<div class="a dv" style="left:749px;top:346px;height:36px;"></div>
<div class="a dv" style="left:833px;top:346px;height:36px;"></div>
<div class="a dv" style="left:909px;top:346px;height:36px;"></div>
<div class="a dv" style="left:923px;top:346px;height:36px;"></div>
<div class="a dv" style="left:936px;top:346px;height:36px;"></div>
<div class="a dv" style="left:950px;top:346px;height:36px;"></div>
<div class="a dv" style="left:963px;top:346px;height:36px;"></div>
<div class="a dv" style="left:977px;top:346px;height:36px;"></div>
<div class="a " style="left:15px;top:381px;width:987px;height:1px;background:rgba(255,255,255,.55)"></div>
<div class="a cb" style="left:17.5px;top:359.0px;"></div>
<svg class="a" style="left:31px;top:358.0px" width="10" height="10" viewBox="0 0 10 10"><circle cx="5" cy="5" r="4.6" fill="#1672c0"/><rect x="4.1" y="4" width="1.8" height="3.9" fill="#fff"/><circle cx="5" cy="2.6" r="0.95" fill="#fff"/></svg>
<svg class="a" style="left:43.2px;top:357.8px" width="11" height="10" viewBox="0 0 11 10"><path d="M5.5 0.6Q6.1 0.6 6.5 1.3L10.6 8.4Q11 9.4 10 9.5L1 9.5Q0 9.4 0.4 8.4L4.5 1.3Q4.9 0.6 5.5 0.6Z" fill="#e07b2c"/><rect x="4.9" y="3" width="1.2" height="3.6" fill="#fff"/><rect x="4.9" y="7.2" width="1.2" height="1.2" fill="#fff"/></svg>
<div class="a t" style="left:57px;top:359.5px;width:38px;text-align:center;font-size:7.5px">Liberada</div>
<div class="a ts" style="left:99.5px;top:355.0px;font-size:6.2px">NF-e:</div>
<div class="a num" style="left:119px;top:354.0px;">43.506</div>
<div class="a ts" style="left:99.5px;top:365.5px;">Pré-Nota:  10.754</div>
<div class="a t" style="left:187px;top:359.5px;width:6px;text-align:center">S</div>
<div class="a t" style="left:205px;top:353.4px;">Digitação:  07/10/2025</div>
<div class="a t" style="left:205px;top:363.9px;">Emissão:  07/10/2025</div>
<div class="a t" style="left:299px;top:354.0px;font-size:7.55px">Razão Social - Maitê Ferreira Sophia</div>
<div class="a ts" style="left:299px;top:364.5px;">E-mail: pedro.teruel@triplos.com.br</div>
<div class="a val" style="left:560px;top:359.0px;width:93.5px;text-align:right">R$5.000,00</div>
<div class="a t" style="left:660px;top:353.4px;">Financeira:  07/10/2025</div>
<div class="a t" style="left:660px;top:363.9px;">Fiscal:  07/10/2025</div>
<div class="a t" style="left:754px;top:350.4px;font-size:7.15px">Espécie:</div>
<div class="a t" style="left:786.5px;top:350.0px;font-size:6.85px">ESPÉCIE</div>
<div class="a t" style="left:786.5px;top:358.0px;font-size:6.85px">TRIPLOS</div>
<div class="a t" style="left:754px;top:369.0px;font-size:7.5px">Qtde:  0</div>
<div class="a t" style="left:838px;top:353.4px;">Bruto:  100.000,00</div>
<div class="a t" style="left:838px;top:363.9px;">Líquido:  100.000,00</div>
<svg class="a" style="left:910.8px;top:357.7px" width="11" height="11" viewBox="0 0 11 11"><path d="M0.8 10.2L1.3 7.6L7.6 1.3L9.7 3.4L3.4 9.7Z" fill="#2a7fc1"/><path d="M8.2 0.7L9 0.1Q9.5 -0.2 10 0.3L10.7 1Q11.2 1.5 10.9 2L10.3 2.8Z" fill="#2a7fc1"/></svg>
<svg class="a" style="left:924.5px;top:359.0px" width="11" height="8" viewBox="0 0 11 8"><path d="M0.2 4Q5.5 -3.2 10.8 4Q5.5 11.2 0.2 4Z" fill="#1f7bc2"/><circle cx="5.5" cy="4" r="2.4" fill="#dcebf7"/><circle cx="5.5" cy="4" r="1.6" fill="#1f7bc2"/><circle cx="5.9" cy="3.6" r="0.5" fill="#dcebf7"/></svg>
<div class="a cbd" style="left:985px;top:359.0px;"></div>
<div class="a " style="left:15px;top:382px;width:987px;height:34.5px;background:#aee9fb"></div>
<div class="a dv" style="left:29px;top:382px;height:34.5px;"></div>
<div class="a dv" style="left:55px;top:382px;height:34.5px;"></div>
<div class="a dv" style="left:95px;top:382px;height:34.5px;"></div>
<div class="a dv" style="left:180px;top:382px;height:34.5px;"></div>
<div class="a dv" style="left:200px;top:382px;height:34.5px;"></div>
<div class="a dv" style="left:295px;top:382px;height:34.5px;"></div>
<div class="a dv" style="left:578px;top:382px;height:34.5px;"></div>
<div class="a dv" style="left:655px;top:382px;height:34.5px;"></div>
<div class="a dv" style="left:749px;top:382px;height:34.5px;"></div>
<div class="a dv" style="left:833px;top:382px;height:34.5px;"></div>
<div class="a dv" style="left:909px;top:382px;height:34.5px;"></div>
<div class="a dv" style="left:923px;top:382px;height:34.5px;"></div>
<div class="a dv" style="left:936px;top:382px;height:34.5px;"></div>
<div class="a dv" style="left:950px;top:382px;height:34.5px;"></div>
<div class="a dv" style="left:963px;top:382px;height:34.5px;"></div>
<div class="a dv" style="left:977px;top:382px;height:34.5px;"></div>
<div class="a " style="left:15px;top:415.5px;width:987px;height:1px;background:rgba(255,255,255,.55)"></div>
<div class="a cb" style="left:17.5px;top:394.25px;"></div>
<svg class="a" style="left:31px;top:393.25px" width="10" height="10" viewBox="0 0 10 10"><circle cx="5" cy="5" r="4.6" fill="#1672c0"/><rect x="4.1" y="4" width="1.8" height="3.9" fill="#fff"/><circle cx="5" cy="2.6" r="0.95" fill="#fff"/></svg>
<svg class="a" style="left:43.2px;top:393.05px" width="11" height="10" viewBox="0 0 11 10"><path d="M5.5 0.6Q6.1 0.6 6.5 1.3L10.6 8.4Q11 9.4 10 9.5L1 9.5Q0 9.4 0.4 8.4L4.5 1.3Q4.9 0.6 5.5 0.6Z" fill="#e07b2c"/><rect x="4.9" y="3" width="1.2" height="3.6" fill="#fff"/><rect x="4.9" y="7.2" width="1.2" height="1.2" fill="#fff"/></svg>
<div class="a t" style="left:57px;top:394.75px;width:38px;text-align:center;font-size:7.5px">Liberada</div>
<div class="a ts" style="left:99.5px;top:390.25px;font-size:6.2px">NF-e:</div>
<div class="a num" style="left:119px;top:389.25px;">43.502</div>
<div class="a ts" style="left:99.5px;top:400.75px;">Pré-Nota:  10.749</div>
<div class="a t" style="left:187px;top:394.75px;width:6px;text-align:center">S</div>
<div class="a t" style="left:205px;top:388.65px;">Digitação:  01/10/2025</div>
<div class="a t" style="left:205px;top:399.15px;">Emissão:  01/10/2025</div>
<div class="a t" style="left:299px;top:389.25px;font-size:7.25px">AUTOMUNDI TECNOLOGIA EM AUDIO, VIDEO E AUTOMAÇÃO LTDA ME</div>
<div class="a ts" style="left:299px;top:399.75px;">E-mail: compras@automundi.com.br; financeiro@automundi.com.br</div>
<div class="a val" style="left:560px;top:394.25px;width:93.5px;text-align:right">R$2.778,06</div>
<div class="a t" style="left:660px;top:388.65px;">Financeira:  01/10/2025</div>
<div class="a t" style="left:660px;top:399.15px;">Fiscal:  01/10/2025</div>
<div class="a t" style="left:754px;top:385.65px;font-size:7.15px">Espécie:</div>
<div class="a t" style="left:786.5px;top:385.25px;font-size:6.85px">ESPÉCIE</div>
<div class="a t" style="left:786.5px;top:393.25px;font-size:6.85px">TRIPLOS</div>
<div class="a t" style="left:754px;top:404.25px;font-size:7.5px">Qtde:  0</div>
<div class="a t" style="left:838px;top:388.65px;">Bruto:  1.250,00</div>
<div class="a t" style="left:838px;top:399.15px;">Líquido:  1.050,00</div>
<svg class="a" style="left:910.8px;top:392.95px" width="11" height="11" viewBox="0 0 11 11"><path d="M0.8 10.2L1.3 7.6L7.6 1.3L9.7 3.4L3.4 9.7Z" fill="#2a7fc1"/><path d="M8.2 0.7L9 0.1Q9.5 -0.2 10 0.3L10.7 1Q11.2 1.5 10.9 2L10.3 2.8Z" fill="#2a7fc1"/></svg>
<svg class="a" style="left:924.5px;top:394.25px" width="11" height="8" viewBox="0 0 11 8"><path d="M0.2 4Q5.5 -3.2 10.8 4Q5.5 11.2 0.2 4Z" fill="#1f7bc2"/><circle cx="5.5" cy="4" r="2.4" fill="#dcebf7"/><circle cx="5.5" cy="4" r="1.6" fill="#1f7bc2"/><circle cx="5.9" cy="3.6" r="0.5" fill="#dcebf7"/></svg>
<div class="a cbd" style="left:985px;top:394.25px;"></div>
<div class="a" style="left:15px;top:416px;width:987px;height:20px;overflow:hidden;background:#fbfbfb">
<div class="a dv" style="left:14px;top:0;height:20px;background:#f9f9f9"></div>
<div class="a dv" style="left:40px;top:0;height:20px;background:#f9f9f9"></div>
<div class="a dv" style="left:80px;top:0;height:20px;background:#f9f9f9"></div>
<div class="a dv" style="left:165px;top:0;height:20px;background:#f9f9f9"></div>
<div class="a dv" style="left:185px;top:0;height:20px;background:#f9f9f9"></div>
<div class="a dv" style="left:280px;top:0;height:20px;background:#f9f9f9"></div>
<div class="a dv" style="left:563px;top:0;height:20px;background:#f9f9f9"></div>
<div class="a dv" style="left:640px;top:0;height:20px;background:#f9f9f9"></div>
<div class="a dv" style="left:734px;top:0;height:20px;background:#f9f9f9"></div>
<div class="a dv" style="left:818px;top:0;height:20px;background:#f9f9f9"></div>
<div class="a dv" style="left:894px;top:0;height:20px;background:#f9f9f9"></div>
<div class="a dv" style="left:908px;top:0;height:20px;background:#f9f9f9"></div>
<div class="a dv" style="left:921px;top:0;height:20px;background:#f9f9f9"></div>
<div class="a dv" style="left:935px;top:0;height:20px;background:#f9f9f9"></div>
<div class="a dv" style="left:948px;top:0;height:20px;background:#f9f9f9"></div>
<div class="a dv" style="left:962px;top:0;height:20px;background:#f9f9f9"></div>
<div class="a cb" style="left:2.5px;top:13.5px"></div>
<div class="a t" style="left:42px;top:13.5px;width:38px;text-align:center">Liberada</div>
<div class="a ts" style="left:84.5px;top:10px;font-size:6.2px">NF-e:</div>
<div class="a t" style="left:172px;top:13.5px;width:6px;text-align:center">S</div>
<div class="a t" style="left:190px;top:9px">Digitação:  01/10/2025</div>
<div class="a t" style="left:284px;top:9px">Agrária Indústria e Comércio Ltda</div>
<div class="a val" style="left:545px;top:13.5px;width:93.5px;text-align:right">R$1.110,00</div>
<div class="a t" style="left:645px;top:9px">Financeira:  01/10/2025</div>
<div class="a t" style="left:739px;top:4px">Espécie:</div>
<div class="a t" style="left:771.5px;top:4px;font-size:7.1px">ESPÉCIE</div>
<div class="a t" style="left:771.5px;top:12px;font-size:7.1px">TRIPLOS</div>
<div class="a t" style="left:823px;top:9px">Bruto:  150,00</div>
</div>
<div class="a " style="left:15px;top:436px;width:987px;height:1px;background:#d8d8d8"></div>
<div class="a " style="left:15px;top:202px;width:987px;height:180.5px;border:2px solid #ee1c24"></div>
<svg class="a" style="left:1009px;top:104px" width="8" height="6" viewBox="0 0 8 6"><path d="M1 5L4 1.5L7 5Z" fill="#555"/></svg>
<div class="a " style="left:1010.5px;top:114px;width:5.5px;height:143.5px;background:#8c8c8c;border-radius:3px"></div>
<div class="a cb" style="left:919px;top:441px;width:7.5px;height:7.5px;border-color:#9a9a9a"></div>
<div class="a " style="left:926.5px;top:440.5px;font-size:6.6px;color:#333;line-height:9px;-webkit-text-stroke:0.25px #333">Exibir Todas</div>
<div class="a " style="left:970px;top:441px;font-size:7.95px;color:#777;line-height:10px">0020 / 0077</div>
<div class="a " style="left:905.5px;top:424.5px;width:119px;height:15px;background:#1b1b1b"></div>
<div class="a " style="left:909px;top:427px;font-size:7.45px;color:#fff;line-height:10px">NF-e rejeitada. Verificar os erros.</div>
<div class="a " style="left:8px;top:455px;font-size:8.6px;font-weight:bold;color:#2aa42a;line-height:10px">[08/10/25 13:43]: Serviço em Operação</div>
<div class="a btn" style="left:8px;top:468.5px;width:50px;height:15px;">Inutilização</div>
<div class="a btn" style="left:63.5px;top:468.5px;width:67px;height:15px;">Verificar SEFAZ</div>
<div class="a btnd" style="left:768.5px;top:468.5px;width:100px;height:15px;">Emitir / Re-emitir DANFe</div>
<div class="a btnd" style="left:873.5px;top:468.5px;width:52px;height:15px;">Baixar XML</div>
<div class="a btn" style="left:930px;top:468.5px;width:47px;height:15px;">Processar</div>
<div class="a btn" style="left:982px;top:468.5px;width:35px;height:15px;">Fechar</div></body></html>
